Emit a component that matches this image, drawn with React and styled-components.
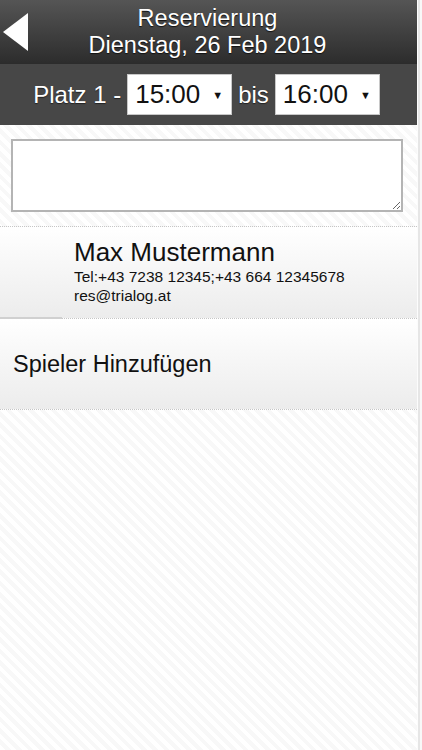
import React from 'react'
import styled, { createGlobalStyle } from 'styled-components'

const Global = createGlobalStyle`
  html, body {
    margin: 0;
    padding: 0;
    height: 100%;
  }
  body {
    font-family: "Liberation Sans", Arial, sans-serif;
    background: #fff;
  }
  #root {
    height: 100%;
  }
`

const Page = styled.div`
  display: flex;
  height: 750px;
  overflow: hidden;
`

const Main = styled.div`
  flex: 1;
  display: flex;
  flex-direction: column;
  background-color: #fff;
  background-image: repeating-linear-gradient(
    45deg,
    #ffffff 0px,
    #ffffff 4px,
    #f8f8f8 4px,
    #f8f8f8 8px
  );
`

const Scrollbar = styled.div`
  width: 5px;
  box-sizing: border-box;
  background: #f8f8f8;
  border-left: 1px solid #fcfcfc;
  box-shadow: inset 2px 0 0 #e6e6e6;
`

const Header = styled.header`
  height: 64px;
  display: flex;
  align-items: center;
  justify-content: center;
  position: relative;
  background: linear-gradient(#555555, #2c2c2c);
  color: #fff;
  text-shadow: 0 1px 1px #111;
`

const BackButton = styled.button`
  position: absolute;
  left: 3px;
  top: 13px;
  width: 26px;
  height: 38px;
  padding: 0;
  border: none;
  background: none;
  cursor: pointer;
`

const Title = styled.h1`
  margin: 0 0 0 -2px;
  font-size: 23.5px;
  font-weight: normal;
  line-height: 27px;
  text-align: center;
`

const SubBar = styled.div`
  height: 61px;
  display: flex;
  align-items: center;
  justify-content: center;
  gap: 6px;
  padding-right: 4px;
  background: #474747;
  color: #fff;
  font-size: 24px;
  text-shadow: 0 1px 1px #222;
`

const Label = styled.span``

const Select = styled.div`
  width: 105px;
  height: 41px;
  box-sizing: border-box;
  display: flex;
  align-items: center;
  justify-content: space-between;
  padding: 0 8px 0 7px;
  background: #fff;
  border: 1px solid #c8c8c8;
  color: #111;
  font-size: 26px;
  text-shadow: none;
`

const Caret = styled.span`
  font-size: 11px;
`

const Notes = styled.textarea`
  display: block;
  margin: 14px 14px 14px 11px;
  height: 73px;
  box-sizing: border-box;
  border: 2px solid #b4b4b4;
  background: #fff;
  resize: vertical;
  font-family: inherit;
`

const List = styled.ul`
  list-style: none;
  margin: 0;
  padding: 0;
  border-top: 1px dotted #c6c6c6;
`

const Item = styled.li`
  display: flex;
  align-items: ${(p) => (p.center ? 'center' : 'flex-start')};
  height: ${(p) => p.h}px;
  background: linear-gradient(#ffffff, #ececec);
  border-bottom: 1px dotted #c6c6c6;
  position: relative;
  color: #111;
`

const Thumb = styled.div`
  width: 62px;
  align-self: stretch;
  border-bottom: 2px solid #d0d0d0;
  margin-bottom: -1px;
  flex: none;
`

const Player = styled.div`
  padding: 10px 0 0 12px;
`

const Name = styled.div`
  font-size: 26px;
  line-height: 30px;
`

const Detail = styled.div`
  font-size: 15.5px;
  line-height: 19px;
`

const AddText = styled.div`
  padding-left: 13px;
  font-size: 23.5px;
`

export default function App() {
  return (
    <>
      <Global />
      <Page>
        <Main>
          <Header>
            <BackButton aria-label="Zurück">
              <svg width="26" height="38" viewBox="0 0 26 38">
                <polygon points="25,0 25,38 0,19" fill="#fff" />
              </svg>
            </BackButton>
            <Title>
              Reservierung
              <br />
              Dienstag, 26 Feb 2019
            </Title>
          </Header>
          <SubBar>
            <Label>Platz 1 -</Label>
            <Select>
              15:00 <Caret>▼</Caret>
            </Select>
            <Label>bis</Label>
            <Select>
              16:00 <Caret>▼</Caret>
            </Select>
          </SubBar>
          <Notes />
          <List>
            <Item h={91}>
              <Thumb />
              <Player>
                <Name>Max Mustermann</Name>
                <Detail>Tel:+43 7238 12345;+43 664 12345678</Detail>
                <Detail>res@trialog.at</Detail>
              </Player>
            </Item>
            <Item h={90} center>
              <AddText>Spieler Hinzufügen</AddText>
            </Item>
          </List>
        </Main>
        <Scrollbar />
      </Page>
    </>
  )
}
